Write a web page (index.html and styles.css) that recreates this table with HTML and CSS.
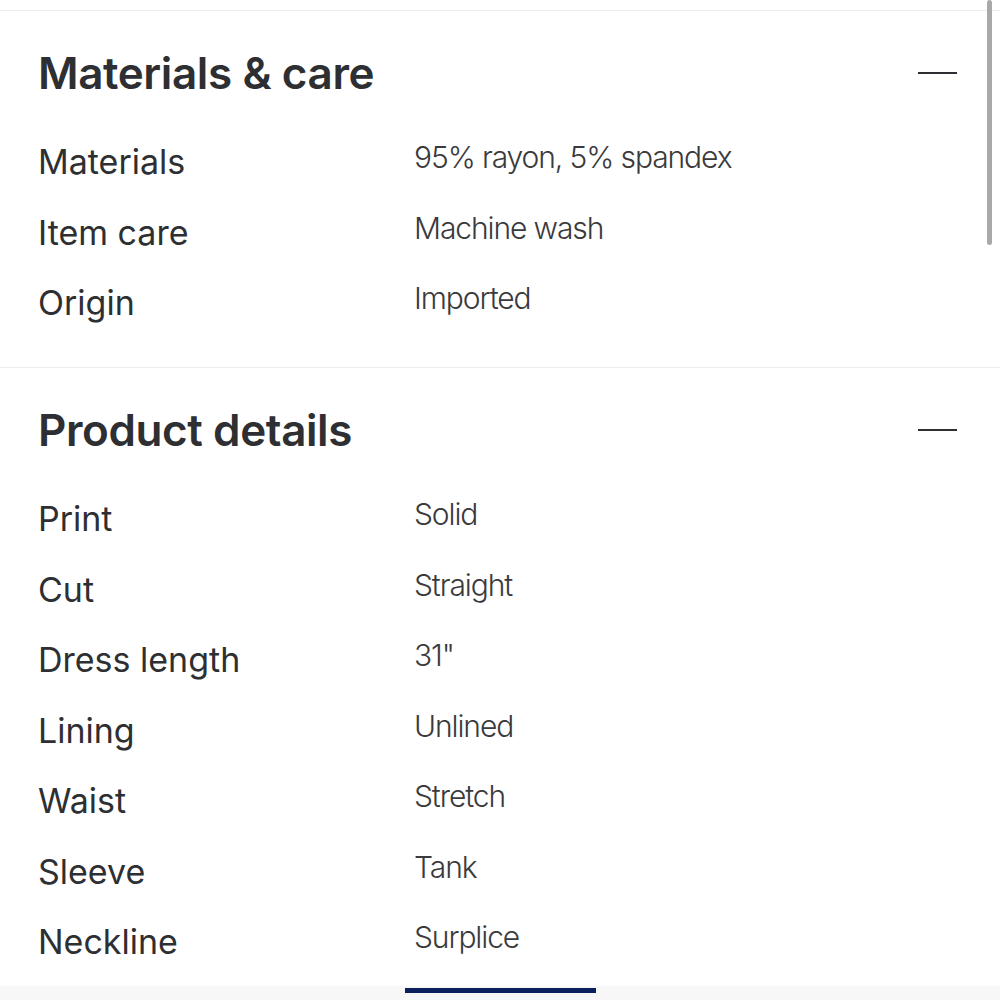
FILE: index.html
```html
<!DOCTYPE html>
<html>
<head>
<meta charset="utf-8">
<title>Product details</title>
<link rel="stylesheet" href="styles.css">
</head>
<body>
	<div class="top_line"></div>

	<div class="section">
		<div class="section_head">
			<h2>Materials &amp; care</h2>
			<span class="minus"></span>
		</div>
		<div class="rows">
			<div class="label">Materials</div><div class="value">95% rayon, 5% spandex</div>
			<div class="label">Item care</div><div class="value">Machine wash</div>
			<div class="label">Origin</div><div class="value">Imported</div>
		</div>
	</div>

	<div class="section">
		<div class="section_head">
			<h2>Product details</h2>
			<span class="minus"></span>
		</div>
		<div class="rows">
			<div class="label">Print</div><div class="value">Solid</div>
			<div class="label">Cut</div><div class="value">Straight</div>
			<div class="label">Dress length</div><div class="value">31"</div>
			<div class="label">Lining</div><div class="value">Unlined</div>
			<div class="label">Waist</div><div class="value">Stretch</div>
			<div class="label">Sleeve</div><div class="value">Tank</div>
			<div class="label">Neckline</div><div class="value">Surplice</div>
		</div>
	</div>

	<div class="scroll_thumb"></div>
	<div class="bottom_bar"><span class="indicator"></span></div>
</body>
</html>
```
FILE: styles.css
```css
body {
	margin: 0;
	background: #fff;
	font-family: Inter, "Noto Sans", sans-serif;
	color: #2e2f32;
	overflow: hidden;
}
.top_line {
	height: 10px;
	border-bottom: 1px solid #ececec;
}
.section {
	padding: 37px 43px 28.5px 38px;
	border-bottom: 1px solid #ececec;
}
.section_head {
	display: flex;
	align-items: center;
	justify-content: space-between;
	height: 50px;
}
h2 {
	margin: 0;
	font-size: 44px;
	line-height: 50px;
	font-weight: 600;
	letter-spacing: -0.4px;
}
.minus {
	width: 39px;
	height: 2.5px;
	background: #2e2f32;
}
.rows {
	display: grid;
	grid-template-columns: 376px 1fr;
	grid-auto-rows: 70.5px;
	margin-top: 29px;
	align-items: center;
}
.label {
	font-size: 34px;
	line-height: 40px;
	color: #2e2f32;
}
.value {
	font-size: 30px;
	line-height: 36px;
	font-weight: 300;
	letter-spacing: -1.1px;
	color: #3a3a3c;
	margin-top: -10px;
}
.scroll_thumb {
	position: absolute;
	top: 0;
	left: 987px;
	width: 5px;
	height: 245px;
	border-radius: 3px;
	background: #a9a9a9;
}
.bottom_bar {
	position: fixed;
	left: 0;
	right: 0;
	bottom: 0;
	height: 14px;
	background: #f7f7f7;
}
.indicator {
	position: absolute;
	left: 405px;
	top: 2px;
	width: 191px;
	height: 5px;
	background: #0b1f5c;
}
```
